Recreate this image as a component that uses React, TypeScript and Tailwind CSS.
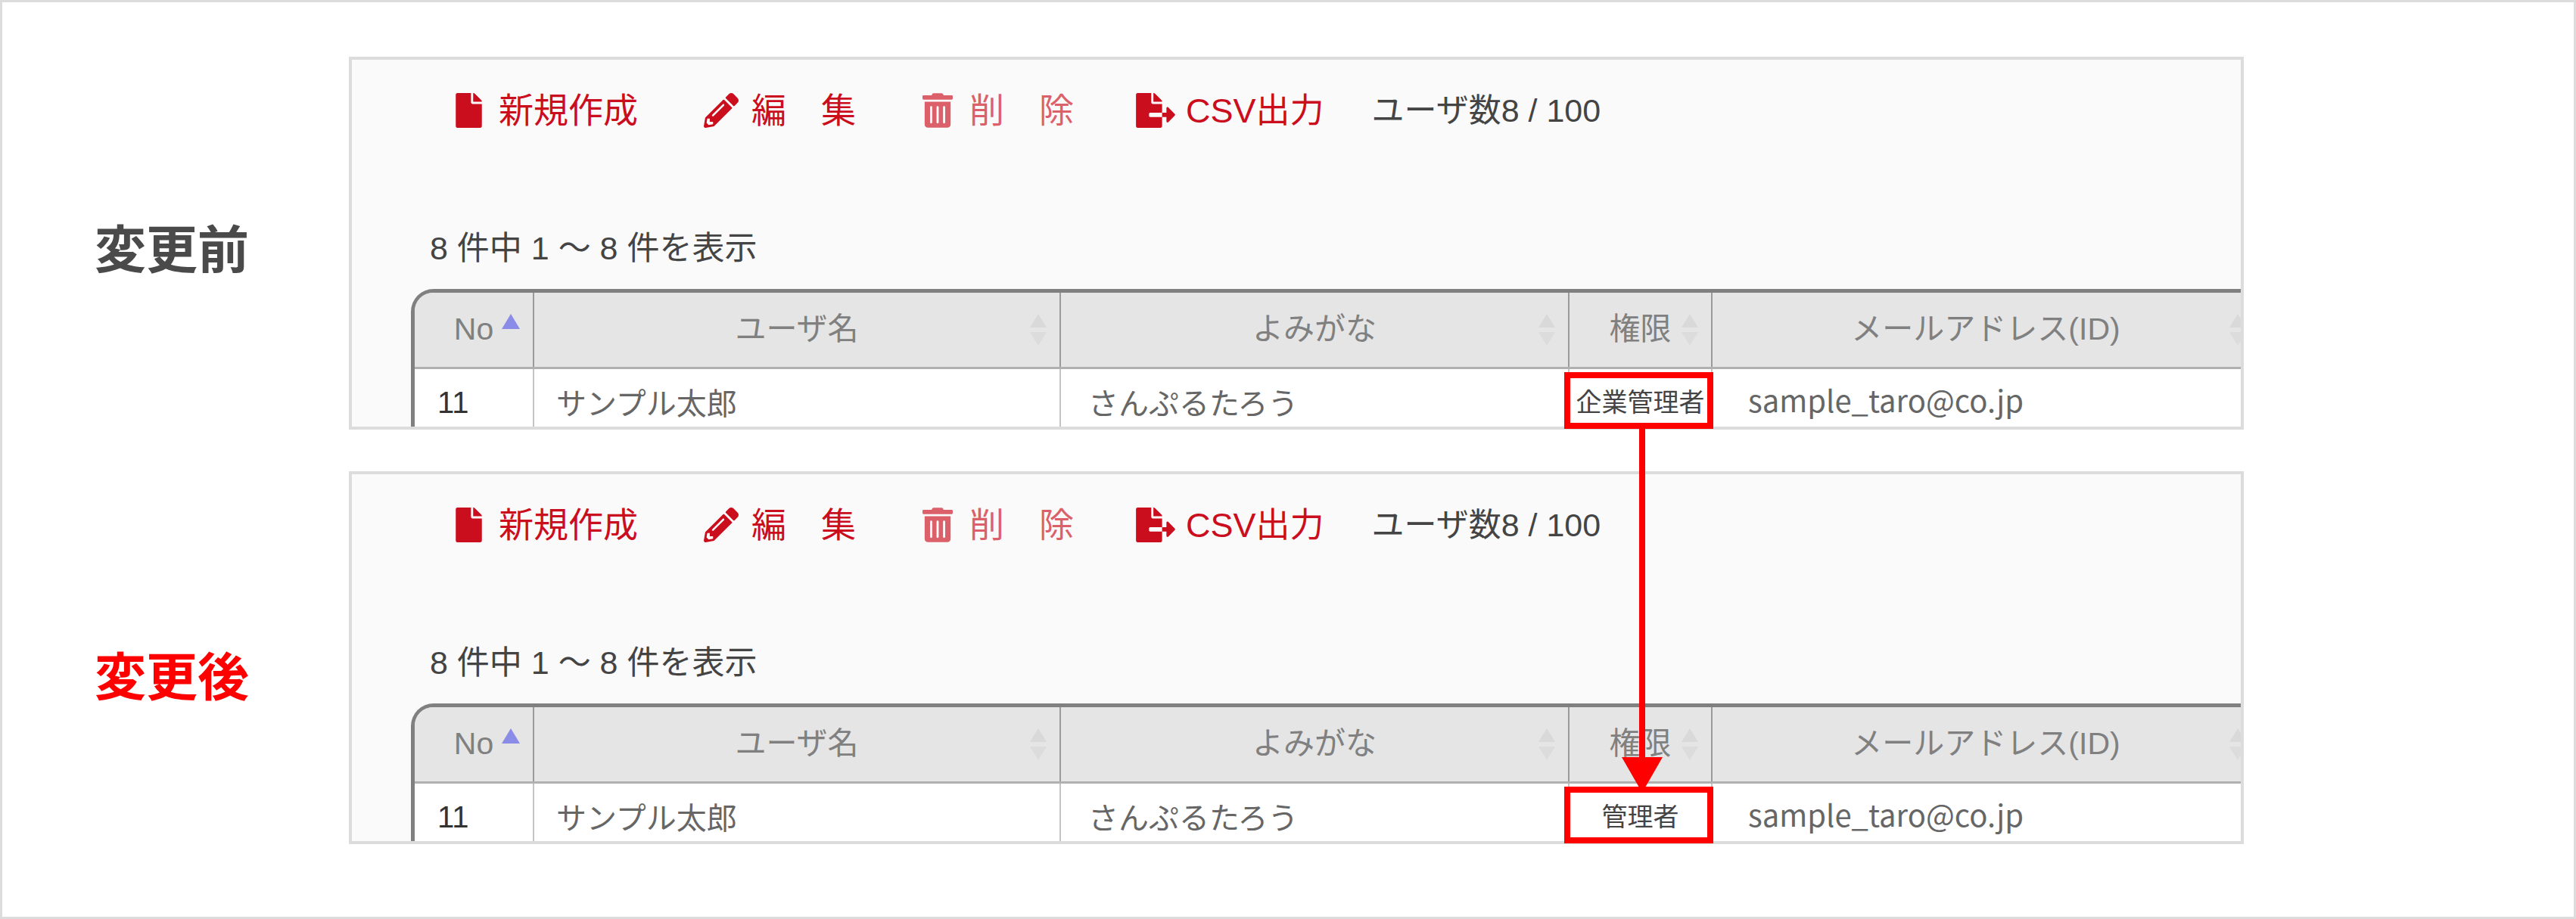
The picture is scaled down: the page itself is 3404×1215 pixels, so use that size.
import { FaFile, FaFileExport, FaPencilAlt, FaTrashAlt } from 'react-icons/fa'

const SortArrows = () => (
  <svg className="absolute right-[16px] top-[28px]" width="24" height="42" viewBox="0 0 24 42">
    <path d="M12 0 L23 18 H1 Z" fill="#d9d9d9" />
    <path d="M1 24 H23 L12 42 Z" fill="#dcdcdc" />
  </svg>
)

const HeadCell = ({ label, arrows = true, className = '' }: { label: string; arrows?: boolean; className?: string }) => (
  <div className={`relative flex items-center justify-center border-r-2 border-[#9a9a9a] text-[41px] text-[#808080] ${className}`}>
    {label}
    {arrows && <SortArrows />}
  </div>
)

const Panel = ({ role, className = '' }: { role: string; className?: string }) => (
  <div className={`h-[493px] w-[2504px] shrink-0 overflow-hidden border-4 border-[#dcdcdc] bg-[#fafafa] font-['Liberation_Sans','Noto_Sans_CJK_JP',sans-serif] ${className}`}>
    <div className="flex h-[46px] items-center mt-[44px] pl-[137px] text-[46px] leading-none text-[#cb0e1e]">
      <FaFile className="h-[46px] w-[35px]" />
      <span className="ml-[22px]">新規作成</span>
      <FaPencilAlt className="ml-[87px] h-[46px] w-[46px]" />
      <span className="ml-[17px]">編　集</span>
      <div className="flex items-center opacity-65">
        <FaTrashAlt className="ml-[88px] h-[46px] w-[40px]" />
        <span className="ml-[22px]">削　除</span>
      </div>
      <FaFileExport className="ml-[82px] h-[46px] w-[52px]" />
      <span className="ml-[14px] text-[45px]">CSV出力</span>
      <span className="ml-[63px] text-[43px] text-[#444444]">ユーザ数8 / 100</span>
    </div>
    <div className="mt-[135px] pl-[103px] text-[43px] leading-[48px] text-[#444444]">8 件中 1 〜 8 件を表示</div>
    <div className="ml-[78px] mt-[30px] w-[2600px] rounded-tl-[30px] border-l-[5px] border-t-[5px] border-[#808080] bg-white">
      <div className="grid h-[101px] grid-cols-[158px_696px_672px_189px_724px] overflow-hidden rounded-tl-[24px] border-b-[3px] border-[#b0b0b0] bg-[#e5e5e5]">
        <div className="relative flex items-center justify-center border-r-2 border-[#9a9a9a] text-[41px] text-[#808080]">
          No
          <svg className="absolute left-[115px] top-[28px]" width="24" height="20" viewBox="0 0 24 20">
            <path d="M12 0 L24 20 H0 Z" fill="#8b8be8" />
          </svg>
        </div>
        <HeadCell label="ユーザ名" />
        <HeadCell label="よみがな" />
        <HeadCell label="権限" />
        <HeadCell label="メールアドレス(ID)" className="border-r-0" />
      </div>
      <div className="grid h-[90px] grid-cols-[158px_696px_672px_189px_724px] text-[40px] text-[#666666]">
        <div className="border-r-2 border-[#c4c4c4] pl-[30px] pt-[24px] leading-[40px] text-[#333333]">11</div>
        <div className="border-r-2 border-[#c4c4c4] pl-[29px] pt-[26px] leading-[40px]">サンプル太郎</div>
        <div className="border-r-2 border-[#c4c4c4] pl-[36px] pt-[26px] leading-[40px]">さんぷるたろう</div>
        <div className="flex justify-center border-r-2 border-[#c4c4c4] pt-[24px] text-[34px] leading-[40px] text-[#444444]">{role}</div>
        <div className="pl-[47px] pt-[12px] font-['Noto_Sans_CJK_JP',sans-serif] text-[40px] leading-[56px]">sample_taro@co.jp</div>
      </div>
    </div>
  </div>
)

const App = () => (
  <div className="relative h-[1215px] w-[3404px] overflow-hidden border-[3px] border-[#dcdcdc] bg-white font-['Liberation_Sans','Noto_Sans_CJK_JP',sans-serif]">
    <div className="mt-[72px] flex">
      <div className="w-[458px] pl-[122px] pt-[216px] text-[68px] font-bold leading-[80px] text-[#4a4a4a]">変更前</div>
      <Panel role="企業管理者" />
    </div>
    <div className="mt-[55px] flex">
      <div className="w-[458px] pl-[122px] pt-[233px] text-[68px] font-bold leading-[80px] text-[#ff0000]">変更後</div>
      <Panel role="管理者" />
    </div>

    {/* red callouts over the two tables */}
    <div className="absolute left-[2064px] top-[489px] h-[75px] w-[197px] border-[8px] border-[#ff0000]" />
    <div className="absolute left-[2064px] top-[1037px] h-[75px] w-[197px] border-[8px] border-[#ff0000]" />
    <svg className="absolute left-[2134px] top-[560px]" width="70" height="490" viewBox="0 0 70 490">
      <path d="M29 0 H37 V440 H29 Z" fill="#ff0000" />
      <path d="M6 438 H60 L33 485 Z" fill="#ff0000" />
    </svg>
  </div>
)

export default App
